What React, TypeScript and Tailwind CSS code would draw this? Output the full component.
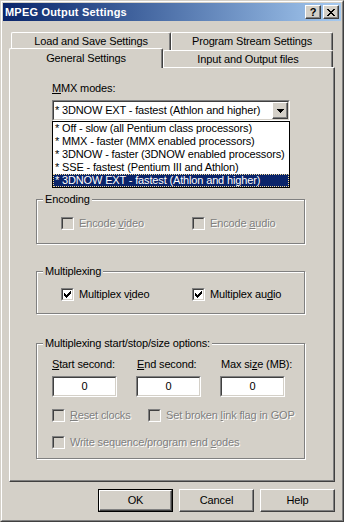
import React from "react";

const RAISED =
  "border border-t-white border-l-white border-r-[#404040] border-b-[#404040] shadow-[inset_-1px_-1px_0_#808080] bg-[#d4d0c8]";
const DIS = "text-[#808080] [text-shadow:1px_1px_0_#ffffff]";

function CheckMark() {
  return (
    <svg
      width="7"
      height="7"
      viewBox="0 0 7 7"
      shapeRendering="crispEdges"
      className="absolute left-[2px] top-[2px]"
    >
      <g fill="#000">
        <rect x="6" y="0" width="1" height="1" />
        <rect x="5" y="1" width="2" height="1" />
        <rect x="0" y="2" width="1" height="1" />
        <rect x="4" y="2" width="3" height="1" />
        <rect x="0" y="3" width="2" height="1" />
        <rect x="3" y="3" width="3" height="1" />
        <rect x="0" y="4" width="5" height="1" />
        <rect x="1" y="5" width="3" height="1" />
        <rect x="2" y="6" width="1" height="1" />
      </g>
    </svg>
  );
}

function XGlyph() {
  return (
    <svg width="8" height="7" viewBox="0 0 8 7" shapeRendering="crispEdges">
      <g fill="#000">
        <rect x="0" y="0" width="2" height="1" />
        <rect x="6" y="0" width="2" height="1" />
        <rect x="1" y="1" width="2" height="1" />
        <rect x="5" y="1" width="2" height="1" />
        <rect x="2" y="2" width="4" height="1" />
        <rect x="3" y="3" width="2" height="1" />
        <rect x="2" y="4" width="4" height="1" />
        <rect x="1" y="5" width="2" height="1" />
        <rect x="5" y="5" width="2" height="1" />
        <rect x="0" y="6" width="2" height="1" />
        <rect x="6" y="6" width="2" height="1" />
      </g>
    </svg>
  );
}

function ArrowDown() {
  return (
    <svg width="7" height="4" viewBox="0 0 7 4" shapeRendering="crispEdges">
      <g fill="#000">
        <rect x="0" y="0" width="7" height="1" />
        <rect x="1" y="1" width="5" height="1" />
        <rect x="2" y="2" width="3" height="1" />
        <rect x="3" y="3" width="1" height="1" />
      </g>
    </svg>
  );
}

function Checkbox({ checked = false, disabled = false }: { checked?: boolean; disabled?: boolean }) {
  return (
    <span
      className={`relative block w-[13px] h-[13px] shrink-0 border border-t-[#808080] border-l-[#808080] border-r-white border-b-white ${
        disabled ? "bg-[#d4d0c8]" : "bg-white"
      }`}
    >
      <span className="absolute inset-0 border border-t-[#404040] border-l-[#404040] border-r-[#d4d0c8] border-b-[#d4d0c8]" />
      {checked && <CheckMark />}
    </span>
  );
}

function CheckItem({
  checked = false,
  disabled = false,
  className = "",
  children,
}: {
  checked?: boolean;
  disabled?: boolean;
  className?: string;
  children: React.ReactNode;
}) {
  return (
    <div className={`flex items-center gap-[5px] h-[13px] ${className}`}>
      <Checkbox checked={checked} disabled={disabled} />
      <span className={`whitespace-nowrap ${disabled ? DIS : ""}`}>{children}</span>
    </div>
  );
}

function Group({
  label,
  className = "",
  children,
}: {
  label: string;
  className?: string;
  children: React.ReactNode;
}) {
  return (
    <div
      className={`relative w-[269px] border border-[#808080] shadow-[1px_1px_0_#ffffff,inset_1px_1px_0_#ffffff] ${className}`}
    >
      <span className="absolute left-[6px] -top-[7px] px-[2px] bg-[#d4d0c8] whitespace-nowrap">{label}</span>
      {children}
    </div>
  );
}

function Tab({ className = "", children }: { className?: string; children: React.ReactNode }) {
  return (
    <div
      className={`flex items-center justify-center whitespace-nowrap bg-[#d4d0c8] border-t border-l border-r border-t-white border-l-white border-r-[#404040] rounded-t-[2px] shadow-[inset_-1px_0_0_#808080] ${className}`}
    >
      {children}
    </div>
  );
}

function Edit({ value }: { value: string }) {
  return (
    <div className="w-[65px] h-[21px] border border-t-[#808080] border-l-[#808080] border-r-white border-b-white">
      <div className="h-full border border-t-[#404040] border-l-[#404040] border-r-[#d4d0c8] border-b-[#d4d0c8] bg-white flex items-center justify-center">
        {value}
      </div>
    </div>
  );
}

const ITEMS = [
  "* Off - slow (all Pentium class processors)",
  "* MMX - faster (MMX enabled processors)",
  "* 3DNOW - faster (3DNOW enabled processors)",
  "* SSE - fastest (Pentium III and Athlon)",
  "* 3DNOW EXT - fastest (Athlon and higher)",
];

export default function App() {
  return (
    <div className="w-[344px] h-[522px] bg-[#d4d0c8] font-['Liberation_Sans',Arial,sans-serif] text-[11px] leading-[13px] tracking-[-0.15px] text-black">
      <div className="h-full border border-t-[#d4d0c8] border-l-[#d4d0c8] border-r-[#404040] border-b-[#404040]">
        <div className="h-full border border-t-white border-l-white border-r-[#808080] border-b-[#808080] p-px">
          {/* Title bar */}
          <div className="h-[18px] flex items-center bg-gradient-to-r from-[#0a246a] to-[#a6caf0] pl-[2px] pr-[2px]">
            <span className="flex-1 font-bold text-white whitespace-nowrap tracking-[0.2px]">MPEG Output Settings</span>
            <div className="flex gap-[2px]">
              <div className={`w-[16px] h-[14px] ${RAISED} flex items-center justify-center font-bold leading-none`}>
                ?
              </div>
              <div className={`w-[16px] h-[14px] ${RAISED} flex items-center justify-center`}>
                <XGlyph />
              </div>
            </div>
          </div>

          <div className="ml-[6px] w-[326px] mt-[11px]">
            {/* Tabs: back row */}
            <div className="flex pl-[2px] h-[18px]">
              <Tab className="w-[160px] h-[18px] pb-[1px]">Load and Save Settings</Tab>
              <Tab className="w-[162px] h-[18px] pb-[1px]">Program Stream Settings</Tab>
            </div>
            {/* Tabs: front row */}
            <div className="flex h-[17px]">
              <Tab className="relative z-10 -mt-[2px] w-[154px] h-[20px] pb-[1px]">General Settings</Tab>
              <Tab className="w-[170px] h-[17px]">Input and Output files</Tab>
            </div>

            {/* Panel */}
            <div className="h-[415px] border border-t-white border-l-white border-r-[#404040] border-b-[#404040] shadow-[inset_-1px_-1px_0_#808080] pl-[26px] pt-[14px]">
              <div className="ml-[16px] w-[238px]">
                <div>
                  <u>M</u>MX modes:
                </div>
                <div className="relative mt-[5px] h-[21px] border border-t-[#808080] border-l-[#808080] border-r-white border-b-white">
                  <div className="h-full border border-t-[#404040] border-l-[#404040] border-r-[#d4d0c8] border-b-[#d4d0c8] bg-white flex items-center">
                    <span className="flex-1 pl-[1px] whitespace-nowrap overflow-hidden">
                      * 3DNOW EXT - fastest (Athlon and higher)
                    </span>
                    <div className={`w-[16px] h-[17px] ${RAISED} flex items-center justify-center`}>
                      <ArrowDown />
                    </div>
                  </div>
                  {/* Dropdown list */}
                  <div className="absolute -left-px top-[20px] w-[238px] h-[67px] border border-black bg-white z-20">
                    {ITEMS.map((t, i) =>
                      i === ITEMS.length - 1 ? (
                        <div
                          key={t}
                          className="h-[13px] bg-[#0a246a] text-white pl-[1px] border border-dotted border-[#f5db95] leading-[11px] whitespace-nowrap"
                        >
                          {t}
                        </div>
                      ) : (
                        <div key={t} className="h-[13px] pl-[2px] whitespace-nowrap">
                          {t}
                        </div>
                      )
                    )}
                  </div>
                </div>
              </div>

              <Group label="Encoding" className="mt-[78px] h-[45px] pt-[17px]">
                <div className="flex pl-[24px]">
                  <CheckItem disabled className="w-[131px]">
                    Encode <u>v</u>ideo
                  </CheckItem>
                  <CheckItem disabled>
                    Encode <u>a</u>udio
                  </CheckItem>
                </div>
              </Group>

              <Group label="Multiplexing" className="mt-[27px] h-[43px] pt-[16px]">
                <div className="flex pl-[24px]">
                  <CheckItem checked className="w-[131px]">
                    Multiplex v<u>i</u>deo
                  </CheckItem>
                  <CheckItem checked>
                    Multiplex au<u>d</u>io
                  </CheckItem>
                </div>
              </Group>

              <Group label="Multiplexing start/stop/size options:" className="mt-[29px] h-[116px] pt-[14px] pl-[15px]">
                <div className="grid grid-cols-[84px_84px_65px]">
                  <div>
                    <u>S</u>tart second:
                  </div>
                  <div className="pl-px">
                    <u>E</u>nd second:
                  </div>
                  <div className="pl-px whitespace-nowrap">
                    Max si<u>z</u>e (MB):
                  </div>
                </div>
                <div className="grid grid-cols-[84px_84px_65px] mt-[5px]">
                  <Edit value="0" />
                  <Edit value="0" />
                  <Edit value="0" />
                </div>
                <div className="flex mt-[12px]">
                  <CheckItem disabled className="w-[96px]">
                    <u>R</u>eset clocks
                  </CheckItem>
                  <CheckItem disabled>
                    Set broken <u>l</u>ink flag in GOP
                  </CheckItem>
                </div>
                <CheckItem disabled className="mt-[14px]">
                  Write sequence/program end <u>c</u>odes
                </CheckItem>
              </Group>
            </div>

            {/* Buttons */}
            <div className="flex justify-end gap-[6px] mt-[7px]">
              <div className="w-[75px] h-[23px] border border-black">
                <div className={`h-full ${RAISED} flex items-center justify-center`}>OK</div>
              </div>
              <div className={`w-[75px] h-[23px] ${RAISED} flex items-center justify-center`}>Cancel</div>
              <div className={`w-[75px] h-[23px] ${RAISED} flex items-center justify-center`}>Help</div>
            </div>
          </div>
        </div>
      </div>
    </div>
  );
}
